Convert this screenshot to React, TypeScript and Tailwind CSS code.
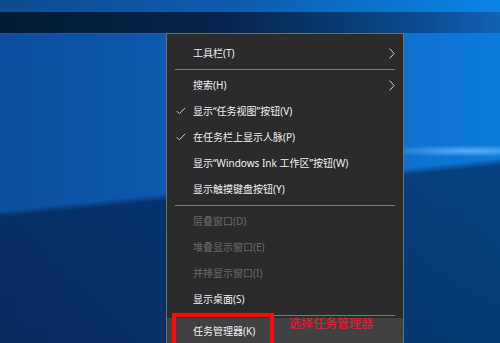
import { Fragment } from "react";

type Item = {
  label: string;
  checked?: boolean;
  submenu?: boolean;
  disabled?: boolean;
  hover?: boolean;
};

const groups: Item[][] = [
  [{ label: "工具栏(T)", submenu: true }],
  [
    { label: "搜索(H)", submenu: true },
    { label: "显示“任务视图”按钮(V)", checked: true },
    { label: "在任务栏上显示人脉(P)", checked: true },
    { label: "显示“Windows Ink 工作区”按钮(W)" },
    { label: "显示触摸键盘按钮(Y)" },
  ],
  [
    { label: "层叠窗口(D)", disabled: true },
    { label: "堆叠显示窗口(E)", disabled: true },
    { label: "并排显示窗口(I)", disabled: true },
    { label: "显示桌面(S)" },
  ],
  [{ label: "任务管理器(K)", hover: true }],
];

const CheckIcon = () => (
  <svg width="10" height="8" viewBox="0 0 10 8" fill="none">
    <path d="M0.8 4.2 L3.4 6.8 L9.2 0.8" stroke="#cfcfcf" strokeWidth="1" />
  </svg>
);

const ChevronIcon = () => (
  <svg width="6" height="11" viewBox="0 0 6 11" fill="none">
    <path d="M0.6 0.6 L5.2 5.5 L0.6 10.4" stroke="#cfcfcf" strokeWidth="1" />
  </svg>
);

const MenuRow = ({ item }: { item: Item }) => (
  <div
    className={`flex h-[26px] items-center ${item.hover ? "bg-[#414141]" : ""}`}
  >
    <span className="flex w-[26px] justify-center pl-[2px]">
      {item.checked && <CheckIcon />}
    </span>
    <span
      className={`flex-1 whitespace-nowrap text-[10px] leading-none ${
        item.disabled ? "text-[#6a6a6a]" : "text-[#f0f0f0]"
      }`}
    >
      {item.label}
    </span>
    {item.submenu && (
      <span className="mr-[8px] flex">
        <ChevronIcon />
      </span>
    )}
  </div>
);

const Separator = () => (
  <div className="flex h-[6px] items-center px-[8px]">
    <div className="h-px w-full bg-[#7a7a7a]" />
  </div>
);

export default function App() {
  return (
    <div
      className="relative h-[343px] w-[500px] overflow-hidden"
      style={{ fontFamily: '"Noto Sans", "Noto Sans CJK SC", sans-serif' }}
    >
      {/* desktop wallpaper */}
      <div className="flex h-full flex-col">
        <div className="h-[12px] bg-[linear-gradient(to_right,#0d4a8e,#0e5fb0_50%,#0b84e6)]" />
        <div className="h-[21px] bg-[linear-gradient(to_right,#021a37,#04264c_45%,#0b4c92_85%,#1363b3)]" />
        <div className="relative flex-1 bg-[linear-gradient(to_right,#0b4f9d,#0d5cb2_40%,#0f6fcc_75%,#0c7ad9)]">
          <div className="absolute inset-0 bg-[linear-gradient(174deg,transparent_49%,rgba(2,20,55,0.55)_51%,rgba(2,18,50,0.6)_100%)]" />
          <div className="absolute inset-0 bg-[radial-gradient(ellipse_90px_6px_at_470px_118px,rgba(120,200,255,0.7),transparent)]" />
        </div>
      </div>

      {/* context menu */}
      <div className="absolute left-[166px] top-[33px] w-[238px] border border-[#6e6e6e] bg-[#2b2b2b] pt-[6px] pb-[20px]">
        {groups.map((group, gi) => (
          <Fragment key={gi}>
            {gi > 0 && <Separator />}
            {group.map((item) => (
              <MenuRow key={item.label} item={item} />
            ))}
          </Fragment>
        ))}
      </div>

      {/* annotation */}
      <div className="absolute left-[172px] top-[313px] h-[40px] w-[102px] border-[4px] border-[#ff0a0a]" />
      <div className="absolute left-[289px] top-[318px] text-[12px] leading-none text-[#e3212c]">
        选择任务管理器
      </div>
    </div>
  );
}
